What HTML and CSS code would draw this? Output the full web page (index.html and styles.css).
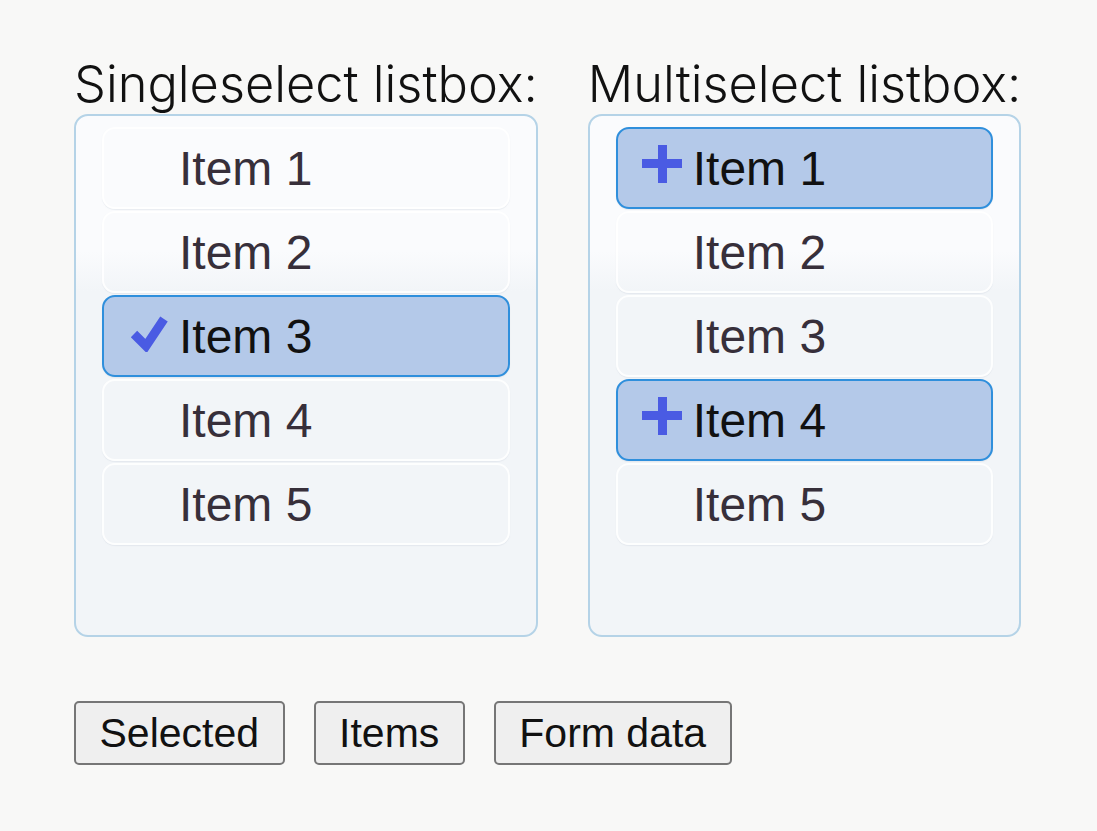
FILE: index.html
```html
<!DOCTYPE html>
<html lang="en">
<head>
    <meta charset="UTF-8">
    <title>Listbox Example</title>
    <link rel="stylesheet" href="styles.css">
</head>
<body>
    <div class="listbox-area">
        <div class="listbox-col">
            <span class="listbox-label" id="ss_label">Singleselect listbox:</span>
            <ul class="listbox" role="listbox" aria-labelledby="ss_label">
                <li class="option" role="option">Item 1</li>
                <li class="option" role="option">Item 2</li>
                <li class="option selected" role="option" aria-selected="true">
                    <svg class="mark" viewBox="0 0 38 38" width="38" height="38" aria-hidden="true">
                        <polyline points="4,20 16,32 34,5" fill="none" stroke="#4a5be3" stroke-width="9"/>
                    </svg>
                    Item 3
                </li>
                <li class="option" role="option">Item 4</li>
                <li class="option" role="option">Item 5</li>
            </ul>
        </div>
        <div class="listbox-col">
            <span class="listbox-label" id="ms_label">Multiselect listbox:</span>
            <ul class="listbox multi" role="listbox" aria-labelledby="ms_label" aria-multiselectable="true">
                <li class="option selected" role="option" aria-selected="true">
                    <svg class="mark" viewBox="0 0 40 38" width="40" height="38" aria-hidden="true">
                        <path d="M16 0h9v38h-9z M0 14h40v9h-40z" fill="#4a5be3"/>
                    </svg>
                    Item 1
                </li>
                <li class="option" role="option">Item 2</li>
                <li class="option" role="option">Item 3</li>
                <li class="option selected" role="option" aria-selected="true">
                    <svg class="mark" viewBox="0 0 40 38" width="40" height="38" aria-hidden="true">
                        <path d="M16 0h9v38h-9z M0 14h40v9h-40z" fill="#4a5be3"/>
                    </svg>
                    Item 4
                </li>
                <li class="option" role="option">Item 5</li>
            </ul>
        </div>
    </div>

    <div class="actions">
        <button type="button">Selected</button>
        <button type="button">Items</button>
        <button type="button">Form data</button>
    </div>
</body>
</html>
```

FILE: styles.css
```css
* {
    box-sizing: border-box;
}

body {
    margin: 0;
    padding: 56px 74px;
    background: #f8f8f7;
    color: #111;
}

.listbox-area {
    display: flex;
    gap: 50px;
    align-items: flex-start;
}

.listbox-col {
    display: flex;
    flex-direction: column;
}

.listbox-label {
    font-family: Inter, sans-serif;
    font-weight: 300;
    font-size: 50.5px;
    line-height: 56px;
    color: #111;
    white-space: nowrap;
}

.listbox {
    list-style: none;
    margin: 2px 0 0;
    height: 523px;
    padding: 11px 26px;
    border: 2px solid #b5d3e7;
    border-radius: 14px;
    background: linear-gradient(to bottom, #fafbfd 0, #fafbfd 135px, #f2f5f8 175px, #f2f5f8 100%);
    display: flex;
    flex-direction: column;
    gap: 2px;
}

.option {
    position: relative;
    height: 82px;
    padding-left: 75px;
    display: flex;
    align-items: center;
    border: 2px solid rgba(255, 255, 255, 0.85);
    border-radius: 13px;
    box-shadow: 0 1px 1px rgba(200, 208, 220, 0.35);
    font-family: "Liberation Sans", Arial, sans-serif;
    font-size: 48px;
    color: #372f3a;
}

.option.selected {
    background: #b4c9e9;
    border-color: #2f8fdc;
    color: #111;
}

.mark {
    position: absolute;
    top: 17px;
    left: 26px;
}

.multi .mark {
    left: 24px;
    top: 16px;
}

.actions {
    display: flex;
    gap: 29px;
    margin-top: 64px;
}

button {
    font-family: "Liberation Sans", Arial, sans-serif;
    font-size: 41px;
    line-height: 46px;
    padding: 7px 23.5px;
    color: #111;
    background: #efefef;
    border: 2px solid #767676;
    border-radius: 5px;
}
```
